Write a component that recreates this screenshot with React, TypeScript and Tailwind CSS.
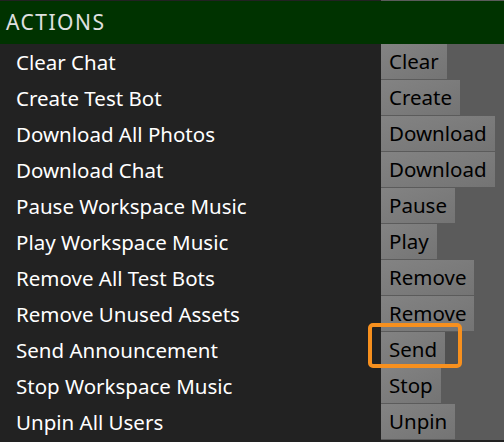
import React from 'react';

type Action = {
    label: string;
    button: string;
    highlight?: boolean;
};

const ACTIONS: Action[] = [
    { label: "Clear Chat", button: "Clear" },
    { label: "Create Test Bot", button: "Create" },
    { label: "Download All Photos", button: "Download" },
    { label: "Download Chat", button: "Download" },
    { label: "Pause Workspace Music", button: "Pause" },
    { label: "Play Workspace Music", button: "Play" },
    { label: "Remove All Test Bots", button: "Remove" },
    { label: "Remove Unused Assets", button: "Remove" },
    { label: "Send Announcement", button: "Send", highlight: true },
    { label: "Stop Workspace Music", button: "Stop" },
    { label: "Unpin All Users", button: "Unpin" },
];

const Row: React.FC<Action> = ({ label, button, highlight }) => {
    return (
        <div className="flex h-[36px]">
            <div className="w-[381px] bg-[#222222] pl-4 flex items-center text-[20.5px] text-white">
                {label}
            </div>
            <div className="relative flex-1 bg-[#5b5b5b] pb-px">
                <button className="h-[35px] px-2 text-[20.5px] text-black bg-gradient-to-br from-[#838383] to-[#747474] leading-none">
                    {button}
                </button>
                {highlight && (
                    <>
                        <div className="absolute left-[64px] top-0 w-[13px] h-[35px] bg-[#505050]" />
                        <div className="absolute left-[-13px] top-[-9px] w-[94px] h-[45px] rounded-[5px] border-4 border-[#f7901e]" />
                    </>
                )}
            </div>
        </div>
    );
};

export default function App() {
    return (
        <div className="w-[504px] h-[442px] bg-[#222222] font-['Noto_Sans',sans-serif] overflow-hidden">
            <div className="flex h-px">
                <div className="w-[381px] bg-[#222222]" />
                <div className="flex-1 bg-[#5b5b5b]" />
            </div>
            <div className="h-[43px] bg-[#003300] pl-[6px] flex items-center text-[21px] tracking-[1.5px] text-[#e0e0e0]">
                ACTIONS
            </div>
            {ACTIONS.map((a, i) => (
                <Row key={i} {...a} />
            ))}
        </div>
    );
}
